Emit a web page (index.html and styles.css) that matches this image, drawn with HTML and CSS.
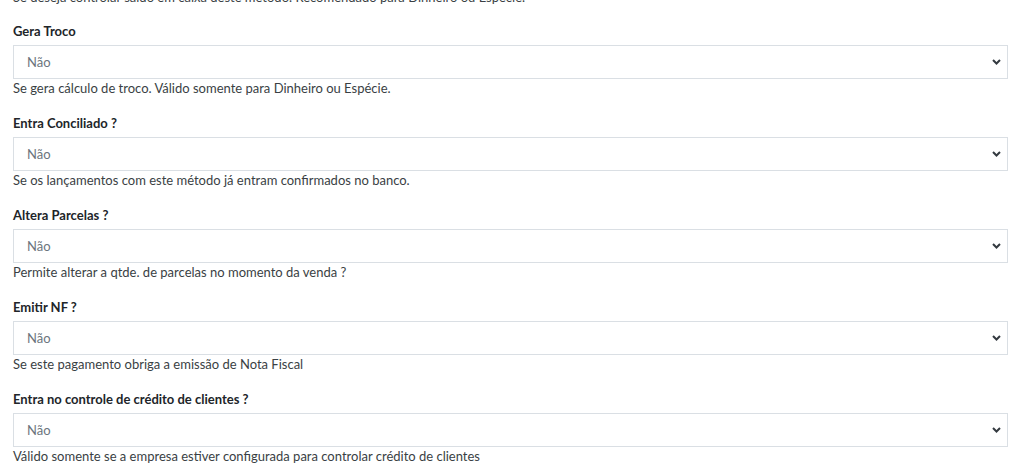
FILE: index.html
```html
<!DOCTYPE html>
<html lang="pt-BR">
<head>
  <meta charset="UTF-8">
  <title>Método de pagamento</title>
  <link rel="stylesheet" href="styles.css">
</head>
<body>

  <div class="form-container">
    <small class="help top-help">Se deseja controlar saldo em caixa deste método. Recomendado para Dinheiro ou Espécie.</small>

    <div class="form-group">
      <label for="geraTroco">Gera Troco</label>
      <div class="select-wrap">
        <select id="geraTroco"><option>Não</option><option>Sim</option></select>
        <svg class="chevron" width="9" height="6" viewBox="0 0 9 6"><path d="M1 1 L4.5 4.5 L8 1" fill="none" stroke="#343a40" stroke-width="2"/></svg>
      </div>
      <small class="help">Se gera cálculo de troco. Válido somente para Dinheiro ou Espécie.</small>
    </div>

    <div class="form-group">
      <label for="entraConciliado">Entra Conciliado ?</label>
      <div class="select-wrap">
        <select id="entraConciliado"><option>Não</option><option>Sim</option></select>
        <svg class="chevron" width="9" height="6" viewBox="0 0 9 6"><path d="M1 1 L4.5 4.5 L8 1" fill="none" stroke="#343a40" stroke-width="2"/></svg>
      </div>
      <small class="help">Se os lançamentos com este método já entram confirmados no banco.</small>
    </div>

    <div class="form-group">
      <label for="alteraParcelas">Altera Parcelas ?</label>
      <div class="select-wrap">
        <select id="alteraParcelas"><option>Não</option><option>Sim</option></select>
        <svg class="chevron" width="9" height="6" viewBox="0 0 9 6"><path d="M1 1 L4.5 4.5 L8 1" fill="none" stroke="#343a40" stroke-width="2"/></svg>
      </div>
      <small class="help">Permite alterar a qtde. de parcelas no momento da venda ?</small>
    </div>

    <div class="form-group">
      <label for="emitirNf">Emitir NF ?</label>
      <div class="select-wrap">
        <select id="emitirNf"><option>Não</option><option>Sim</option></select>
        <svg class="chevron" width="9" height="6" viewBox="0 0 9 6"><path d="M1 1 L4.5 4.5 L8 1" fill="none" stroke="#343a40" stroke-width="2"/></svg>
      </div>
      <small class="help">Se este pagamento obriga a emissão de Nota Fiscal</small>
    </div>

    <div class="form-group">
      <label for="controleCredito">Entra no controle de crédito de clientes ?</label>
      <div class="select-wrap">
        <select id="controleCredito"><option>Não</option><option>Sim</option></select>
        <svg class="chevron" width="9" height="6" viewBox="0 0 9 6"><path d="M1 1 L4.5 4.5 L8 1" fill="none" stroke="#343a40" stroke-width="2"/></svg>
      </div>
      <small class="help">Válido somente se a empresa estiver configurada para controlar crédito de clientes</small>
    </div>
  </div>

</body>
</html>
```

FILE: styles.css
```css
body {
  margin: 0;
  background: #fff;
  font-family: Lato, "Open Sans", sans-serif;
  font-size: 13px;
  color: #212529;
}

.form-container {
  width: 995px;
  padding-left: 13px;
  margin-top: -12px;
}

.help {
  display: block;
  font-size: 13px;
  line-height: 18px;
  color: #3a3f44;
}

.top-help {
  margin-bottom: 15px;
}

.form-group {
  margin-bottom: 16px;
}

label {
  display: block;
  font-weight: bold;
  line-height: 20px;
  margin-bottom: 4px;
}

.select-wrap {
  position: relative;
}

select {
  display: block;
  width: 100%;
  height: 34px;
  padding: 0 13px;
  border: 1px solid #dadfe4;
  border-radius: 0;
  background: #fff;
  font-family: inherit;
  font-size: 13px;
  color: #6c757d;
  appearance: none;
  -webkit-appearance: none;
}

.chevron {
  position: absolute;
  right: 7px;
  top: 14px;
  pointer-events: none;
}
```
